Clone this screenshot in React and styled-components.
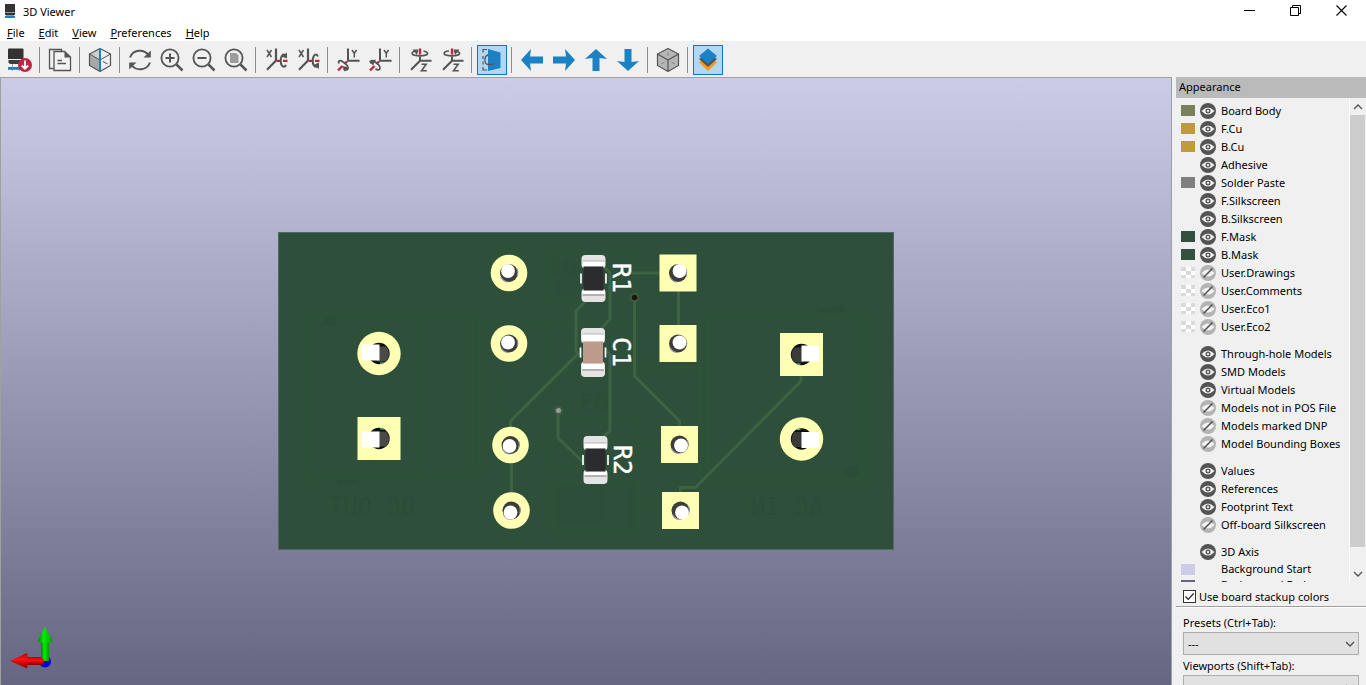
import React, { useState } from 'react';
import styled, { createGlobalStyle } from 'styled-components';

const GlobalStyle = createGlobalStyle`
  *, *::before, *::after { box-sizing: border-box; }
  html, body { margin: 0; height: 100%; overflow: hidden; }
  body, button, select, input {
    font-family: "Noto Sans", "Open Sans", sans-serif;
    font-size: 11px;
    color: #000;
  }
  button { background: none; border: 0; padding: 0; margin: 0; }
`;

const Window = styled.div`
  display: flex;
  flex-direction: column;
  height: 100vh;
  background: #f0f0f0;
`;

const TitleBar = styled.header`
  display: flex;
  align-items: center;
  flex: none;
  height: 24px;
  padding: 0 2px 0 5px;
  background: #fff;
  svg { display: block; }
`;

const Title = styled.h1`
  flex: 1;
  margin: 0 0 0 8px;
  font-size: 11px;
  font-weight: 400;
  line-height: 16px;
`;

const WindowButton = styled.button`
  display: grid;
  place-items: center;
  width: 46px;
  height: 24px;
  padding-bottom: 4px;
`;

const MenuBar = styled.nav`
  display: flex;
  flex: none;
  height: 17px;
  background: #fff;
`;

const MenuButton = styled.button`
  padding: 0 7px;
  line-height: 17px;
`;

const ToolBar = styled.div`
  display: flex;
  align-items: center;
  flex: none;
  height: 36px;
  padding: 2px 4px 0;
`;

const ToolButton = styled.button`
  display: grid;
  place-items: center;
  width: 30px;
  height: 30px;
  margin: 0 1px;
  border: 1px solid ${(p) => (p.$active ? '#0078d7' : 'transparent')};
  background: ${(p) => (p.$active ? '#b3d7f3' : 'transparent')};
  svg { display: block; }
`;

const Separator = styled.span`
  flex: none;
  width: 1px;
  height: 26px;
  margin: 0 4px 0 3px;
  background: #8c8c8c;
`;

const Main = styled.main`
  display: flex;
  flex: 1;
  min-height: 0;
`;

const Viewport = styled.section`
  position: relative;
  display: flex;
  align-items: center;
  justify-content: center;
  flex: 1;
  min-width: 0;
  padding-top: 18px;
  border: solid #a0a0a0;
  border-width: 1px 1px 0 1px;
  background: linear-gradient(#cccce8, #666682);
`;

const BoardSvg = styled.svg`
  display: block;
  flex: none;
`;

const Gizmo = styled.svg`
  position: absolute;
  left: 8px;
  bottom: 16px;
`;

const Panel = styled.aside`
  display: flex;
  flex-direction: column;
  flex: none;
  width: 190px;
  margin-left: 4px;
`;

const PanelHeader = styled.h2`
  flex: none;
  height: 21px;
  margin: 0;
  padding: 0 3px;
  background: #bababa;
  font-size: 11px;
  font-weight: 400;
  line-height: 19px;
`;

const ListArea = styled.div`
  display: flex;
  flex: 1;
  min-height: 0;
`;

const List = styled.div`
  flex: 1;
  overflow: hidden;
  padding-top: 4px;
`;

const Group = styled.ul`
  margin: 0 0 9px;
  padding: 0;
  list-style: none;
`;

const Row = styled.li`
  display: grid;
  grid-template-columns: 14px 16px auto;
  align-items: center;
  justify-content: start;
  column-gap: 5px;
  height: ${(p) => (p.$compact ? '16px' : '18px')};
  padding-left: 5px;
  white-space: nowrap;
`;

const RowText = styled.span`
  padding-bottom: 2px;
  line-height: 15px;
`;

const checker = 'repeating-conic-gradient(#fff 0 25%, #dadada 0 50%) 0 0 / 10px 8px';

const Swatch = styled.span`
  width: 14px;
  height: 11px;
  margin-bottom: 1px;
  background: ${(p) => (p.$color === 'none' ? checker : p.$color || 'transparent')};
`;

const EyeButton = styled.button`
  width: 16px;
  height: 16px;
  svg { display: block; }
`;

const ScrollBar = styled.div`
  display: flex;
  flex-direction: column;
  flex: none;
  width: 17px;
  padding-right: 1px;
  border-left: 1px solid #fff;
`;

const ScrollArrow = styled.button`
  display: grid;
  place-items: center;
  flex: none;
  height: 17px;
`;

const ScrollTrack = styled.div`
  flex: 1;
`;

const ScrollThumb = styled.div`
  height: 96%;
  background: #cdcdcd;
`;

const StackupRow = styled.label`
  display: flex;
  align-items: center;
  flex: none;
  gap: 3px;
  height: 25px;
  padding: 4px 7px 0;
  border-bottom: 1px solid #a0a0a0;
`;

const CheckBox = styled.input`
  appearance: none;
  width: 13px;
  height: 13px;
  margin: 0;
  border: 1px solid #333;
  background: #fff;
  &:checked {
    background: #fff url("data:image/svg+xml,%3Csvg xmlns='http://www.w3.org/2000/svg' viewBox='0 0 11 11'%3E%3Cpath d='M1.5 5.5l2.7 2.8L9.6 2.5' fill='none' stroke='%23222' stroke-width='1.2'/%3E%3C/svg%3E");
  }
`;

const Presets = styled.div`
  flex: none;
  height: 78px;
  overflow: hidden;
  padding: 7px 7px 0;
  border-top: 1px solid #fff;
`;

const FieldLabel = styled.label`
  display: block;
  height: 16px;
  line-height: 16px;
`;

const SelectBox = styled.div`
  position: relative;
  margin: 1px 0 3px;
  svg { position: absolute; right: 4px; top: 9px; pointer-events: none; }
`;

const Select = styled.select`
  display: block;
  appearance: none;
  width: 100%;
  height: 23px;
  padding: 0 4px;
  border: 1px solid #adadad;
  border-radius: 0;
  background: #e1e1e1;
`;

const DARK = '#545454';
const BLUE = '#1a81c4';
const RED = '#bf2641';

const Icon = ({ children }) => (
  <svg width="24" height="24" viewBox="0 0 24 24" fill="none" stroke={DARK} strokeWidth="1.8">
    {children}
  </svg>
);

const Hexagon = (props) => <path d="M12 .5L22.5 6V17.500L12 23.500L1.500 17.500V6Z" {...props} />;

const AxisX = ({ arrow }) => (
  <>
    <path d="M3 2l4.500 7M7.500 2l-4.500 7" strokeWidth="1.500" />
    <path d="M12 .5V12.500L3 21.800" strokeWidth="2.200" />
    <path d="M12.800 12.800h3.700M19 12.800H23.500" stroke={RED} strokeWidth="2.200" />
    <path d="M22 17c-1 2.400-3 2.400-4.300.2-1.300-2.300-1.300-6.800 0-9C19 6 21 6 22 8.500" strokeWidth="2" />
    <path d={arrow} fill={DARK} stroke="none" />
  </>
);

const AxisY = ({ arrow }) => (
  <>
    <path d="M16 2l2.300 3.500L20.600 2M18.300 5.500V9.500" strokeWidth="1.500" />
    <path d="M12 .5V12.800H23.500" strokeWidth="2" />
    <path d="M11 13.500L8.500 16M6.500 18L2 22.300" stroke={RED} strokeWidth="2.400" />
    <path d="M3 15.500c-1.200-3 1-3.600 3.800-1.800 3.500 2.200 5.800 5.300 5 7.300-.5 1.300-2.500 1-4.300-.3" strokeWidth="1.800" />
    <path d={arrow} fill={DARK} stroke="none" />
  </>
);

const AxisZ = ({ arrow }) => (
  <>
    <path d="M13.500 16.200H18.200L13.500 22.800H18.800" strokeWidth="1.600" />
    <path d="M12 8.500V12.800L3 21.800M12 12.800H23.500" strokeWidth="2" />
    <path d="M12 .5V6.500" stroke={RED} strokeWidth="2.400" />
    <path d="M9 3C2.500 3.500 2.500 7 9 7.700c3 .3 6 .2 8.500-.6 3.500-1.200 2.500-3.200-2-4.100" strokeWidth="1.700" />
    <path d={arrow} fill={DARK} stroke="none" />
  </>
);

const Magnifier = ({ children }) => (
  <>
    <circle cx="10" cy="10" r="8.600" />
    <path d="M16.500 16.500L22.500 22.500" strokeWidth="2.500" />
    {children}
  </>
);

const icons = {
  board: (
    <g stroke="none">
      <path d="M0 1.500Q0 .5 1 .5H14.500Q15.500.5 15.500 1.500V11H0Z" fill="#333" />
      <path d="M.5 12H15V14.500L13.500 16H2L.5 14.500Z" fill="#3c3c3c" />
      <path d="M4.500 16V23M11.500 16V23" stroke="#aaa" strokeWidth="1" />
      <path d="M0 19H15V21.800H0Z" fill={BLUE} />
      <circle cx="17" cy="17" r="7" fill={RED} />
      <path d="M17 12.500V20.500M13.800 17.500L17 20.700L20.200 17.500" stroke="#fff" strokeWidth="1.800" />
    </g>
  ),
  copy: (
    <>
      <path d="M5.500 20.500H1.500V1.500H13.500V4" strokeWidth="1.300" />
      <path d="M6 3.500H16.500L22.500 9V22.500H6Z" fill="#f3f3f3" strokeWidth="1.300" />
      <path d="M16.500 3V9.500H23Z" fill={DARK} stroke="none" />
      <path d="M9.500 12.500H14M9.500 15.500H18" strokeWidth="1.300" />
    </>
  ),
  raytrace: (
    <>
      <Hexagon fill="#eee" stroke="none" />
      <path d="M1.500 6L12 12V23.500L1.500 17.500Z" fill="#a8a8a8" stroke="none" />
      <path d="M1.500 6L12 .5V12Z" fill="#cfcfcf" stroke="none" />
      <Hexagon strokeWidth="1.200" />
      <path d="M1.500 6L12 12L22.500 6M15 13.500L19.500 16" strokeWidth="1" />
      <path d="M12 0V24" stroke={BLUE} strokeWidth="2" />
    </>
  ),
  refresh: (
    <>
      <path d="M2 9.500C5 1.500 15.500.5 20.500 7M22 14.500C19 22.500 8.500 23.500 3.500 17" strokeWidth="1.900" />
      <path d="M22.800 2.500V9.500H15.500ZM1.200 21.500V14.500H8.500Z" fill={DARK} stroke="none" />
    </>
  ),
  zoomIn: <Magnifier><path d="M5.500 10H14.500M10 5.500V14.500" strokeWidth="2" /></Magnifier>,
  zoomOut: <Magnifier><path d="M5.500 10H14.500" strokeWidth="2" /></Magnifier>,
  zoomFit: <Magnifier><path d="M6 5H12L14.500 7.500V15H6Z" fill="#9c9c9c" stroke="none" /></Magnifier>,
  xCw: <AxisX arrow="M23 4.500V10.500L17.500 8.500Z" />,
  xCcw: <AxisX arrow="M23 21V14.500L17.500 17Z" />,
  yCw: <AxisY arrow="M6.500 18L13 19.500L8.500 23.500Z" />,
  yCcw: <AxisY arrow="M1 13L8 11.500L5 17.500Z" />,
  zCw: <AxisZ arrow="M4.500 1.500L10.500 1.500L9 7Z" />,
  zCcw: <AxisZ arrow="M19.500 1.500L13.500 1.500L15 7Z" />,
  ortho: (
    <>
      <path d="M7 1.500H3V4.500M3 8V11M3 13.500V16.500M3 19V22H7" strokeWidth="1.200" />
      <path d="M10 6.500C3.500 7 3.500 15.500 8 16.500" strokeWidth="1.300" />
      <path d="M8 1L20.500 4.500V20L8 23Z" fill={BLUE} stroke="none" />
      <path d="M8 16.200Q12 17 14 15.500" strokeWidth="1.300" />
    </>
  ),
  left: <path d="M1 12L11 1L10 8.500H23V15.500H10L11 23Z" fill={BLUE} stroke="none" />,
  right: <path d="M23 12L13 1L14 8.500H1V15.500H14L13 23Z" fill={BLUE} stroke="none" />,
  up: <path d="M12 1L1 11L8.500 10V23H15.500V10L23 11Z" fill={BLUE} stroke="none" />,
  down: <path d="M12 23L1 13L8.500 14V1H15.500V14L23 13Z" fill={BLUE} stroke="none" />,
  cube: (
    <>
      <Hexagon fill="#b6b6b6" strokeWidth="1.200" />
      <path d="M1.500 6L12 12L22.500 6M12 12V23" strokeWidth="1.200" />
      <path d="M12 4V8M5 16L8.500 14M19 16L15.500 14" stroke="#858585" strokeWidth="1" />
    </>
  ),
  layers: (
    <g stroke="none">
      <path d="M3 14.500L12 23L21 14.500L18 12L12 17L6 12Z" fill="#f79a1b" />
      <path d="M3 11L12 19L21 11L18 9L12 14L6 9Z" fill="#545454" />
      <path d="M12 .5L21 8L12 16L3 8Z" fill={BLUE} />
    </g>
  ),
};

const toolGroups = [
  [['board', 'Reload board']],
  [['copy', 'Copy image']],
  [['raytrace', 'Raytracing']],
  [['refresh', 'Redraw'], ['zoomIn', 'Zoom in'], ['zoomOut', 'Zoom out'], ['zoomFit', 'Zoom to fit']],
  [['xCw', 'Rotate X clockwise'], ['xCcw', 'Rotate X counterclockwise']],
  [['yCw', 'Rotate Y clockwise'], ['yCcw', 'Rotate Y counterclockwise']],
  [['zCw', 'Rotate Z clockwise'], ['zCcw', 'Rotate Z counterclockwise']],
  [['ortho', 'Flip board', true]],
  [['left', 'Move left'], ['right', 'Move right'], ['up', 'Move up'], ['down', 'Move down']],
  [['cube', 'Orthographic projection']],
  [['layers', 'Appearance manager', true]],
];

const layerGroups = [
  [
    ['Board Body', true, '#7a805c'],
    ['F.Cu', true, '#bf9b3a'],
    ['B.Cu', true, '#bf9b3a'],
    ['Adhesive', true],
    ['Solder Paste', true, '#808080'],
    ['F.Silkscreen', true],
    ['B.Silkscreen', true],
    ['F.Mask', true, '#345140'],
    ['B.Mask', true, '#345140'],
    ['User.Drawings', false, 'none'],
    ['User.Comments', false, 'none'],
    ['User.Eco1', false, 'none'],
    ['User.Eco2', false, 'none'],
  ],
  [
    ['Through-hole Models', true],
    ['SMD Models', true],
    ['Virtual Models', true],
    ['Models not in POS File', false],
    ['Models marked DNP', false],
    ['Model Bounding Boxes', false],
  ],
  [
    ['Values', true],
    ['References', true],
    ['Footprint Text', true],
    ['Off-board Silkscreen', false],
  ],
];

const Eye = ({ on }) => (
  <svg width="16" height="16" viewBox="0 0 16 16">
    <circle cx="8" cy="8" r="8" fill={on ? DARK : '#b4b4b4'} />
    <path d="M1.500 8Q8 1 14.500 8Q8 15 1.500 8Z" fill="#f4f4f4" />
    {on ? (
      <>
        <circle cx="8" cy="8" r="2.500" fill={DARK} />
        <circle cx="8" cy="8" r="1.200" fill="#e0e0e0" />
      </>
    ) : (
      <path d="M3.500 12.500L12.500 3.500" stroke={DARK} strokeWidth="1.600" />
    )}
  </svg>
);

function Layer({ name, initial, color }) {
  const [on, setOn] = useState(initial);
  return (
    <Row>
      <Swatch $color={color} />
      <EyeButton type="button" aria-label={`Show ${name}`} aria-pressed={on} onClick={() => setOn(!on)}>
        <Eye on={on} />
      </EyeButton>
      <RowText>{name}</RowText>
    </Row>
  );
}

const Chevron = ({ up }) => (
  <svg width="10" height="6" viewBox="0 0 10 6">
    <path d={up ? 'M1 5L5 1L9 5' : 'M1 1L5 5L9 1'} fill="none" stroke="#505050" strokeWidth="1.300" />
  </svg>
);

const PAD = '#ffffb4';

const RoundPin = ({ x, y, dx, dy, square }) => (
  <g>
    {square
      ? <rect x={x - 18.5} y={y - 18.5} width="37" height="37" fill={PAD} />
      : <circle cx={x} cy={y} r="18.300" fill={PAD} />}
    <circle cx={x} cy={y} r="9" fill="#3c3c3a" />
    <path d={`M${x - 8} ${y + 4}A9 9 0 0 0 ${x - 1} ${y + 9}M${x + 8} ${y - 4}A9 9 0 0 1 ${x + 8} ${y + 3}`} stroke="#8a8aa4" strokeWidth="1.200" fill="none" />
    <circle cx={x + dx} cy={y + dy} r="6.900" fill="#fff" />
  </g>
);

const SquarePin = ({ x, y, side, dy, square }) => (
  <g>
    {square
      ? <rect x={x - 21.5} y={y - 21.5} width="43" height="43" fill={PAD} />
      : <circle cx={x} cy={y} r="21.700" fill={PAD} />}
    <circle cx={x} cy={y} r="10.700" fill="#0c0f0c" />
    <path
      d={side < 0
        ? `M${x - 6} ${y - 7}H${x + 7}A10.7 10.7 0 0 1 ${x + 7} ${y + 8}H${x - 2}Z`
        : `M${x + 6} ${y - 7}H${x - 7}A10.7 10.7 0 0 0 ${x - 7} ${y + 8}H${x + 2}Z`}
      fill={side < 0 ? '#4b4a46' : '#3a3b38'}
    />
    <path d={`M${x - side * 3 - 2} ${y - dy * 9.5}h4`} stroke="#57bd92" strokeWidth="1.200" />
    <rect x={side < 0 ? x - 17 : x} y={y + dy - 8} width="17.500" height="16" fill="#fff" />
  </g>
);

const Chip = ({ x, y, h, band, body, color, label, lx, ly }) => (
  <g>
    <rect x={x} y={y} width="24" height={body + 2} rx="4" fill="#e4e4e4" />
    <rect x={x} y={y + h - body - 2} width="24" height={body + 2} rx="4" fill="#e4e4e4" />
    <path d={`M${x + 1} ${y + band}h22v${body - band}h-22ZM${x + 1} ${y + h - body}h22v${body - band}h-22Z`} fill="#fff" />
    <path d={`M${x + 1} ${y + band}h22`} stroke="#b5b5b5" />
    <path d={`M${x + 1} ${y + h - band - 1}h22`} stroke="#666" />
    <rect x={x + 2} y={y + body} width="20" height={h - body * 2} fill={color} />
    <path d={`M${x - 0.5} ${y + h / 2 - 5}v10M${x + 24.5} ${y + h / 2 - 5}v10`} stroke="#fff" strokeWidth="1.700" />
    <text
      transform={`translate(${lx} ${ly}) rotate(90)`}
      fontFamily="DejaVu Sans Mono"
      fontSize="25"
      fill="#fff"
      stroke="#fff"
      strokeWidth=".4"
    >
      {label}
    </text>
  </g>
);

const Board = () => (
  <BoardSvg width="616" height="318" viewBox="278 232 616 318" role="img" aria-label="Circuit board">
    <rect x="278" y="232" width="616" height="318" fill="#4d6a68" />
    <rect x="279" y="233" width="614" height="316" fill="#2e503a" />
    <g fill="none" stroke="#2e5439" strokeWidth="1">
      <path d="M311 313H472V478H311ZM423 313V478M472 320H480V470L472 474M308 473V482H320" />
      <path d="M708 313H870V480H708ZM700 320V480M862 313V480" />
      <path d="M549 254H637V301H549ZM549 325H637V370H549ZM551 419H638V467H551ZM552 483H639V530H552Z" />
      <path d="M480 322H549M480 443H551M503 381V411H530M638 443H708M638 504H662M637 368H708" />
    </g>
    <g fill="#2b4c37">
      <path d="M323 323L328 316H334L336 326H323ZM335 480H358L338 488ZM844 466H858V474L852 478L845 474Z" />
      <path d="M556 486H603V525H556ZM628 484H636V528H628ZM557 262H603V297H557Z" opacity=".5" />
      <path d="M815 313L842 304L846 313Z" />
    </g>
    <g fill="#2b4d38" fontFamily="DejaVu Sans Mono" fontSize="24" textAnchor="middle">
      <text transform="translate(372 515) scale(-1 1)">DC OUT</text>
      <text transform="translate(787 515) scale(-1 1)">AC IN</text>
      <text transform="translate(594 411) scale(-1 1)" opacity=".5">D3</text>
      <text transform="translate(562 276) scale(-1 1)" opacity=".5">D1</text>
    </g>
    <g fill="none" stroke="#3d6343" strokeWidth="3" strokeLinejoin="round">
      <path d="M603 266L610 273V319L600 330M630 273H660" />
      <path d="M585 302L576 311V351L578 354L510.500 421V428M511.500 462V493" />
      <path d="M606 350L610 355V431L602 438" />
      <path d="M634.500 297V376L679.500 421V428M678.500 291V325" />
      <path d="M558 410V438L583 462M801 376V381L695.500 487.500H680.500V493" />
    </g>
    <circle cx="634.500" cy="297.500" r="4.500" fill="#3d5f3e" />
    <circle cx="634.500" cy="297.500" r="2.800" fill="#20150f" />
    <circle cx="558.500" cy="410.500" r="4.500" fill="#3d5f3e" />
    <circle cx="558.500" cy="410.500" r="2.500" fill="#9a98a0" />

    <RoundPin x={509} y={273} dx={-1} dy={-2} />
    <RoundPin x={509} y={343.5} dx={-1} dy={-1} />
    <RoundPin x={510.5} y={445} dx={-1} dy={1} />
    <RoundPin x={511.5} y={510.5} dx={-1} dy={2} />
    <RoundPin x={678} y={273} dx={1.5} dy={-2} square />
    <RoundPin x={678} y={343.5} dx={1.5} dy={-1} square />
    <RoundPin x={679.5} y={444.5} dx={1.5} dy={1} square />
    <RoundPin x={680.5} y={510.5} dx={1.5} dy={2} square />

    <SquarePin x={379} y={353.5} side={-1} dy={-1} />
    <SquarePin x={379} y={438.5} side={-1} dy={1} square />
    <SquarePin x={801.5} y={354.5} side={1} dy={-1} square />
    <SquarePin x={801.5} y={439} side={1} dy={1} />

    <Chip x={581.5} y={255} h={47} band={6} body={11.5} color="#2c2b2e" label="R1" lx={612.5} ly={263} />
    <Chip x={581} y={328} h={49} band={6} body={13.5} color="#bd9a8a" label="C1" lx={612.5} ly={337} />
    <Chip x={583.5} y={436} h={48} band={7} body={12.5} color="#2c2b2e" label="R2" lx={614} ly={445} />
  </BoardSvg>
);

export default function App() {
  return (
    <Window>
      <GlobalStyle />
      <TitleBar>
        <svg width="10" height="16" viewBox="0 0 10 16">
          <path d="M0 0H10V8H0ZM0 8.500H10V10.500L9 11.500H1L0 10.500Z" fill="#333" />
          <path d="M0 12H10V14H0Z" fill={BLUE} />
        </svg>
        <Title>3D Viewer</Title>
        <WindowButton aria-label="Minimize">
          <svg width="11" height="11"><path d="M0 5.500H11" stroke="#000" /></svg>
        </WindowButton>
        <WindowButton aria-label="Restore">
          <svg width="11" height="11" fill="none" stroke="#000">
            <path d="M.5 2.500H8.500V10.500H.5ZM2.500 2.500V.5H10.500V8.500H8.500" />
          </svg>
        </WindowButton>
        <WindowButton aria-label="Close">
          <svg width="11" height="11"><path d="M.5.5L10.500 10.500M10.500.5L.5 10.500" stroke="#000" strokeWidth="1.100" /></svg>
        </WindowButton>
      </TitleBar>
      <MenuBar>
        {['File', 'Edit', 'View', 'Preferences', 'Help'].map((m) => (
          <MenuButton key={m}><u>{m[0]}</u>{m.slice(1)}</MenuButton>
        ))}
      </MenuBar>
      <ToolBar role="toolbar">
        {toolGroups.map((group, i) => (
          <React.Fragment key={group[0][0]}>
            {i > 0 && <Separator />}
            {group.map(([icon, label, active]) => (
              <ToolButton key={icon} $active={active} aria-label={label}>
                <Icon>{icons[icon]}</Icon>
              </ToolButton>
            ))}
          </React.Fragment>
        ))}
      </ToolBar>
      <Main>
        <Viewport>
          <Board />
          <Gizmo width="46" height="42" viewBox="8 627 46 42">
            <defs>
              <linearGradient id="greenShade"><stop offset="0" stopColor="#087c08" /><stop offset=".4" stopColor="#00f000" /><stop offset="1" stopColor="#079807" /></linearGradient>
              <linearGradient id="redShade" x2="0" y2="1"><stop offset="0" stopColor="#b00000" /><stop offset=".4" stopColor="#ff1010" /><stop offset="1" stopColor="#800000" /></linearGradient>
            </defs>
            <circle cx="44" cy="661.500" r="6" fill="#0000d8" />
            <rect x="40" y="641" width="8" height="20" fill="url(#greenShade)" />
            <path d="M44 627L52 641Q44 645 36.500 641Z" fill="url(#greenShade)" />
            <path d="M24 657H40L44 661L41 665H24Z" fill="url(#redShade)" />
            <path d="M9 661L26 653Q28 661 26 668.500Z" fill="url(#redShade)" />
          </Gizmo>
        </Viewport>
        <Panel>
          <PanelHeader>Appearance</PanelHeader>
          <ListArea>
            <List>
              {layerGroups.map((group) => (
                <Group key={group[0][0]}>
                  {group.map(([name, on, color]) => (
                    <Layer key={name} name={name} initial={on} color={color} />
                  ))}
                </Group>
              ))}
              <Group>
                <Layer name="3D Axis" initial />
                <Row $compact><Swatch $color="#cccce8" /><span /><RowText>Background Start</RowText></Row>
                <Row $compact><Swatch $color="#666682" /><span /><RowText>Background End</RowText></Row>
              </Group>
            </List>
            <ScrollBar>
              <ScrollArrow aria-label="Scroll up"><Chevron up /></ScrollArrow>
              <ScrollTrack><ScrollThumb /></ScrollTrack>
              <ScrollArrow aria-label="Scroll down"><Chevron /></ScrollArrow>
            </ScrollBar>
          </ListArea>
          <StackupRow>
            <CheckBox type="checkbox" defaultChecked />
            Use board stackup colors
          </StackupRow>
          <Presets>
            <FieldLabel htmlFor="presets">Presets (Ctrl+Tab):</FieldLabel>
            <SelectBox>
              <Select id="presets"><option>---</option></Select>
              <Chevron />
            </SelectBox>
            <FieldLabel htmlFor="viewports">Viewports (Shift+Tab):</FieldLabel>
            <SelectBox>
              <Select id="viewports"><option>---</option></Select>
              <Chevron />
            </SelectBox>
          </Presets>
        </Panel>
      </Main>
    </Window>
  );
}
